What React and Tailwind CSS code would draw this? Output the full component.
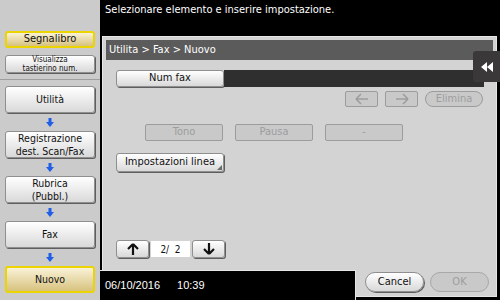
const mono = "[font-family:'Liberation_Sans_Narrow','DejaVu_Sans_Condensed','DejaVu_Sans_Mono',monospace]";

const whiteBtn =
  "flex items-center justify-center rounded-[3px] border border-[#8f8f8f] bg-gradient-to-b from-white to-[#d9d9d9] shadow-[1px_1px_0_#5e5e5e] text-[#111]";
const yellowBtn =
  "flex items-center justify-center rounded-[3px] border-2 border-[#ecd400] bg-gradient-to-b from-[#f9f2d6] to-[#d7c27e] text-[#111]";
const offBtn =
  "flex items-center justify-center rounded-[2px] border border-[#9c9c9c] bg-[#c9c9c9] text-[#9d9d9d]";

function BlueArrow() {
  return (
    <div className="flex h-[18px] items-center justify-center">
      <svg width="8" height="9" viewBox="0 0 8 9">
        <rect x="2.5" y="0" width="3" height="4.5" fill="#1f5fe8" />
        <path d="M0 4 H8 L4 9 Z" fill="#1f5fe8" />
      </svg>
    </div>
  );
}

function FlowBtn({ children, active }) {
  return (
    <div
      className={`${active ? yellowBtn : whiteBtn} mx-[5px] h-[27px] flex-col text-[10.5px] leading-[12.3px]`}
    >
      {children}
    </div>
  );
}

function Arrow({ dir }) {
  const d = dir === "up" ? "M6 1 L1 6 M6 1 L11 6 M6 1 V12" : dir === "down" ? "M6 11 L1 6 M6 11 L11 6 M6 11 V0" : dir === "left" ? "M1 6 L6 1 M1 6 L6 11 M1 6 H13" : "M13 6 L8 1 M13 6 L8 11 M13 6 H1";
  const w = dir === "up" || dir === "down" ? 12 : 14;
  return (
    <svg width={w} height="12" viewBox={`0 0 ${w} 12`}>
      <path d={d} stroke="currentColor" strokeWidth={dir === "up" || dir === "down" ? 2.2 : 1.6} fill="none" />
    </svg>
  );
}

export default function App() {
  return (
    <div className={`relative flex h-[300px] w-[500px] overflow-hidden bg-black ${mono}`}>
      {/* sidebar */}
      <div className="flex w-[100px] flex-col bg-[#cbcbcb]">
        <div className="flex h-[80px] flex-col border-b border-[#9e9e9e] pt-[31px]">
          <div className={`${yellowBtn} mx-[5px] h-[17px] text-[11px]`}>Segnalibro</div>
          <div className={`${whiteBtn} mx-[5px] mt-[7px] h-[18px] flex-col text-[8px] leading-[9.4px]`}>
            <span>Visualizza</span>
            <span>tastierino num.</span>
          </div>
        </div>
        <div className="flex flex-col pt-[6px]">
          <FlowBtn>Utilità</FlowBtn>
          <BlueArrow />
          <FlowBtn>
            <span>Registrazione</span>
            <span>dest. Scan/Fax</span>
          </FlowBtn>
          <BlueArrow />
          <FlowBtn>
            <span>Rubrica</span>
            <span>(Pubbl.)</span>
          </FlowBtn>
          <BlueArrow />
          <FlowBtn>Fax</FlowBtn>
          <BlueArrow />
          <FlowBtn active>Nuovo</FlowBtn>
        </div>
      </div>

      {/* main */}
      <div className="flex flex-1 flex-col">
        <div className="h-[36px] pl-[5px] pt-[3px] text-[11px] leading-[14px] text-white">
          Selezionare elemento e inserire impostazione.
        </div>
        <div className="ml-[2px] mr-[3px] flex h-[261px] flex-col border border-[#e6e6e6] bg-[#d3d3d3]">
          <div className="mx-[3px] mt-[3px] flex h-[20px] items-center bg-[#5b5b5b] pl-[3px] text-[11px] text-white">
            Utilita &gt; Fax &gt; Nuovo
          </div>

          <div className="mt-[10px] flex h-[17px] pl-[13px]">
            <div className={`${whiteBtn} w-[108px] text-[11px]`}>Num fax</div>
            <div className="mr-[12px] flex-1 bg-[#2f2f2f]" />
          </div>

          <div className="mt-[4px] flex h-[16px] justify-end gap-[7px] pr-[13px]">
            <div className={`${offBtn} w-[33px] text-[#8a8a8a]`}>
              <Arrow dir="left" />
            </div>
            <div className={`${offBtn} w-[33px] text-[#8a8a8a]`}>
              <Arrow dir="right" />
            </div>
            <div className={`${offBtn} w-[58px] rounded-full text-[11px]`}>Elimina</div>
          </div>

          <div className="mt-[17px] flex h-[17px] gap-[12px] pl-[42px]">
            <div className={`${offBtn} w-[78px] text-[11px]`}>Tono</div>
            <div className={`${offBtn} w-[78px] text-[11px]`}>Pausa</div>
            <div className={`${offBtn} w-[78px] text-[11px]`}>-</div>
          </div>

          <div className="mt-[12px] flex pl-[13px]">
            <div className={`${whiteBtn} relative h-[19px] w-[108px] text-[11px]`}>
              Impostazioni linea
              <svg className="absolute bottom-[1px] right-[1px]" width="5" height="5" viewBox="0 0 5 5">
                <path d="M5 0 V5 H0 Z" fill="#6a6a6a" />
              </svg>
            </div>
          </div>

          <div className="mt-[68px] flex h-[18px] items-center pl-[13px]">
            <div className={`${whiteBtn} h-[18px] w-[33px]`}>
              <Arrow dir="up" />
            </div>
            <div className="mx-[2px] flex h-[16px] w-[39px] items-center justify-center bg-white text-[10px] text-[#111]">
              2/&nbsp;&nbsp;2
            </div>
            <div className={`${whiteBtn} h-[18px] w-[33px]`}>
              <Arrow dir="down" />
            </div>
          </div>

          <div className="mt-auto flex h-[26px]">
            <div className="-mb-[4px] -ml-[3px] flex h-[30px] w-[256px] items-center gap-[17px] border-r border-t border-[#e6e6e6] bg-black pl-[5px] font-['Liberation_Sans',sans-serif] text-[11px] text-white">
              <span>06/10/2016</span>
              <span>10:39</span>
            </div>
            <div className="flex flex-1 items-start gap-[6px] pl-[9px] pt-[2px]">
              <div className={`${whiteBtn} h-[20px] w-[59px] rounded-full text-[11px]`}>Cancel</div>
              <div className={`${offBtn} h-[20px] w-[59px] rounded-full border-[#a8a8a8] text-[11px]`}>OK</div>
            </div>
          </div>
        </div>
      </div>

      {/* side tab */}
      <div className="absolute left-[473px] top-[51px] flex h-[31px] w-[27px] items-center justify-center rounded-l-[3px] bg-[#3a3838]">
        <svg width="12" height="10" viewBox="0 0 12 10">
          <path d="M0 5 L6 0 V10 Z M6 5 L12 0 V10 Z" fill="#fff" />
        </svg>
      </div>
    </div>
  );
}
